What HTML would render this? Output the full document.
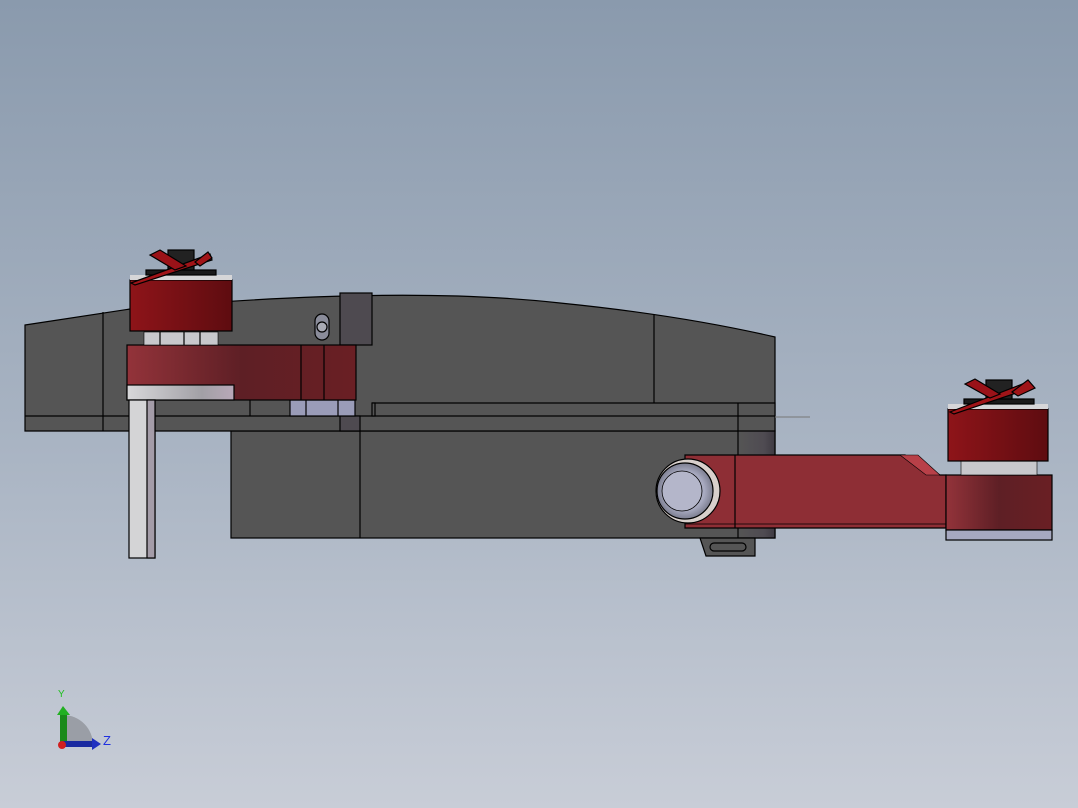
<!DOCTYPE html>
<html><head><meta charset="utf-8"><style>
html,body{margin:0;padding:0;width:1078px;height:808px;overflow:hidden}
body{background:linear-gradient(#8a9aad,#a9b4c3 55%,#c8cdd7)}
svg{position:absolute;left:0;top:0}
text{font-family:"Liberation Sans",sans-serif}
</style></head><body>
<svg width="1078" height="808" viewBox="0 0 1078 808">
<defs>
<linearGradient id="red" x1="0" x2="1"><stop offset="0" stop-color="#8e1419"/><stop offset="1" stop-color="#5e0c10"/></linearGradient>
<linearGradient id="red2" x1="0" x2="1"><stop offset="0" stop-color="#93333a"/><stop offset="0.5" stop-color="#5e1f25"/><stop offset="1" stop-color="#6a1f24"/></linearGradient>
<linearGradient id="sil" x1="0" x2="1"><stop offset="0" stop-color="#d8d8da"/><stop offset="0.7" stop-color="#a2a0a6"/><stop offset="1" stop-color="#b8a8b8"/></linearGradient>
<linearGradient id="dk" x1="0" x2="1"><stop offset="0" stop-color="#555"/><stop offset="0.7" stop-color="#4f4b52"/><stop offset="1" stop-color="#3e3a42"/></linearGradient>
<radialGradient id="pin"><stop offset="0" stop-color="#c0c2d4"/><stop offset="0.7" stop-color="#a8aac0"/><stop offset="1" stop-color="#7c7e90"/></radialGradient>
</defs>
<g stroke="#000" stroke-width="1.2">
<!-- lower box -->
<rect x="231" y="431" width="544" height="107" fill="#555"/>
<line x1="360" y1="431" x2="360" y2="538"/>
<rect x="738" y="403" width="37" height="135" fill="url(#dk)"/>
<!-- main body -->
<path d="M25 325 L130 309 Q400 285 560 303 Q680 315 775 337 L775 431 L25 431 Z" fill="#555"/>
<line x1="25" y1="416" x2="775" y2="416"/>
<line x1="103" y1="312" x2="103" y2="431"/>
<line x1="654" y1="315" x2="654" y2="403"/>
<line x1="372" y1="403" x2="775" y2="403"/>
<line x1="738" y1="403" x2="738" y2="431"/>
<rect x="340" y="293" width="32" height="52" fill="#4e4a50"/>
<rect x="340" y="416" width="20" height="15" fill="#4e4a50"/>
<line x1="250" y1="400" x2="250" y2="416"/>
<rect x="372" y="403" width="3" height="13" fill="#555"/>
<rect x="290" y="400" width="65" height="16" fill="#9a9cb8"/>
<line x1="306" y1="400" x2="306" y2="416"/><line x1="338" y1="400" x2="338" y2="416"/>
<rect x="315" y="314" width="14" height="26" rx="7" fill="#8a8c9a"/>
<circle cx="322" cy="327" r="5" fill="#a8aab4"/>
<!-- left arm -->
<rect x="127" y="345" width="229" height="55" fill="url(#red2)"/>
<line x1="301" y1="345" x2="301" y2="400"/><line x1="324" y1="345" x2="324" y2="400"/>
<rect x="127" y="385" width="107" height="15" fill="url(#sil)"/>
<rect x="129" y="400" width="26" height="158" fill="#d4d4d6"/>
<rect x="147" y="400" width="8" height="158" fill="#a49ca8"/>
<rect x="144" y="332" width="74" height="13" fill="#c8c8cc" stroke-width="0.6"/>
<line x1="160" y1="332" x2="160" y2="345"/><line x1="184" y1="332" x2="184" y2="345"/><line x1="200" y1="332" x2="200" y2="345"/>
<rect x="130" y="280" width="102" height="51" fill="url(#red)"/>
<rect x="130" y="275" width="102" height="5" fill="#d6d6d8" stroke="none"/>
<rect x="146" y="270" width="70" height="5" fill="#1a1a1a"/>
<rect x="168" y="250" width="26" height="20" fill="#222"/>
<path d="M131 283 L210 254 L212 260 L135 285Z" fill="#a01418"/>
<path d="M150 255 L160 250 L186 266 L175 270Z" fill="#9a1218"/>
<path d="M195 262 L208 252 L212 258 L200 266Z" fill="#a01418"/>
<!-- right arm -->
<path d="M685 455 L905 455 L940 475 L946 475 L946 528 L685 528Z" fill="#8e2e35"/>
<path d="M900 455 L918 455 L940 475 L926 475Z" fill="#b84048" stroke-width="0.6"/>
<line x1="735" y1="455" x2="735" y2="528"/>
<line x1="685" y1="524" x2="946" y2="524" stroke-width="0.8"/>
<rect x="946" y="475" width="106" height="55" fill="url(#red2)"/>
<rect x="946" y="530" width="106" height="10" fill="#a6a8c0"/>
<rect x="961" y="461" width="76" height="14" fill="#c8c8cc" stroke-width="0.6"/>
<rect x="948" y="409" width="100" height="52" fill="url(#red)"/>
<rect x="948" y="404" width="100" height="5" fill="#d6d6d8" stroke="none"/>
<rect x="964" y="399" width="70" height="5" fill="#1a1a1a"/>
<rect x="986" y="380" width="26" height="19" fill="#222"/>
<path d="M950 412 L1025 383 L1028 389 L954 414Z" fill="#a01418"/>
<path d="M965 384 L975 379 L1000 394 L990 398Z" fill="#9a1218"/>
<path d="M1012 392 L1028 380 L1035 388 L1018 396Z" fill="#a01418"/>
<circle cx="688" cy="491" r="32" fill="#d8d0cc"/>
<circle cx="685" cy="491" r="28" fill="url(#pin)"/>
<circle cx="682" cy="491" r="20" fill="#b4b6ca" stroke-width="0.8"/>
<path d="M700 538 L755 538 L755 556 L706 556Z" fill="#555"/>
<rect x="710" y="543" width="36" height="8" rx="4" fill="#555"/>
</g>
<line x1="775" y1="417" x2="810" y2="417" stroke="#777" stroke-width="1"/>
<!-- axis -->
<path d="M63 745 L63 715 A30 30 0 0 1 93 745 Z" fill="#9a9ea6"/>
<rect x="60" y="713" width="7" height="32" fill="#1a8a1a"/>
<path d="M57 715 L63 706 L70 715Z" fill="#22b022"/>
<rect x="63" y="741" width="30" height="6" fill="#1a2aa0"/>
<path d="M92 738 L101 744 L92 750Z" fill="#2030c0"/>
<circle cx="62" cy="745" r="4" fill="#d02020"/>
<text x="58" y="697" font-size="10" fill="#20c020">Y</text>
<text x="103" y="745" font-size="13" fill="#2030e0">Z</text>
</svg>
</body></html>
